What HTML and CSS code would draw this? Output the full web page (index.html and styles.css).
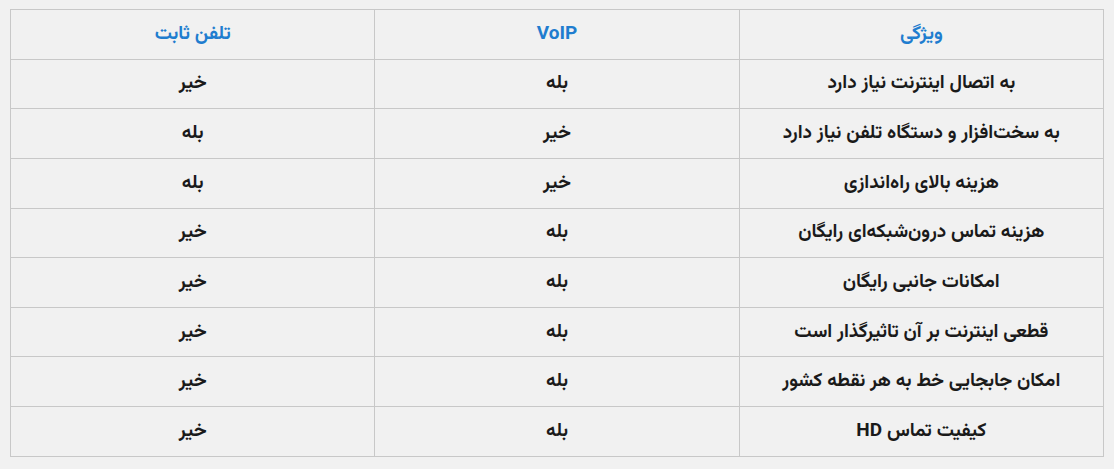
FILE: index.html
```html
<!DOCTYPE html>
<html lang="fa" dir="rtl">
<head>
<meta charset="utf-8">
<link rel="stylesheet" href="styles.css">
</head>
<body>
<div class="wrap">
<table class="compare">
<thead>
<tr><th>ویژگی</th><th>VoIP</th><th>تلفن ثابت</th></tr>
</thead>
<tbody>
<tr><td>به اتصال اینترنت نیاز دارد</td><td>بله</td><td>خیر</td></tr>
<tr><td>به سخت‌افزار و دستگاه تلفن نیاز دارد</td><td>خیر</td><td>بله</td></tr>
<tr><td>هزینه بالای راه‌اندازی</td><td>خیر</td><td>بله</td></tr>
<tr><td>هزینه تماس درون‌شبکه‌ای رایگان</td><td>بله</td><td>خیر</td></tr>
<tr><td>امکانات جانبی رایگان</td><td>بله</td><td>خیر</td></tr>
<tr><td>قطعی اینترنت بر آن تاثیرگذار است</td><td>بله</td><td>خیر</td></tr>
<tr><td>امکان جابجایی خط به هر نقطه کشور</td><td>بله</td><td>خیر</td></tr>
<tr><td>کیفیت تماس HD</td><td>بله</td><td>خیر</td></tr>
</tbody>
</table>
</div>
</body>
</html>
```

FILE: styles.css
```css
html, body {
  margin: 0;
  padding: 0;
  background: #f1f1f1;
}
.wrap {
  padding: 9px 10px 0 10px;
}
.compare {
  width: 100%;
  border-collapse: collapse;
  table-layout: fixed;
  font-family: "Vazirmatn", "Noto Sans Arabic", "DejaVu Sans", sans-serif;
  font-size: 19px;
  font-weight: bold;
  color: #1a1a1a;
}
.compare th,
.compare td {
  border: 1px solid #c8c8c8;
  height: 49.65px;
  padding: 0 8px;
  text-align: center;
  vertical-align: middle;
  box-sizing: border-box;
}
.compare th {
  color: #1f7dcf;
}
```
